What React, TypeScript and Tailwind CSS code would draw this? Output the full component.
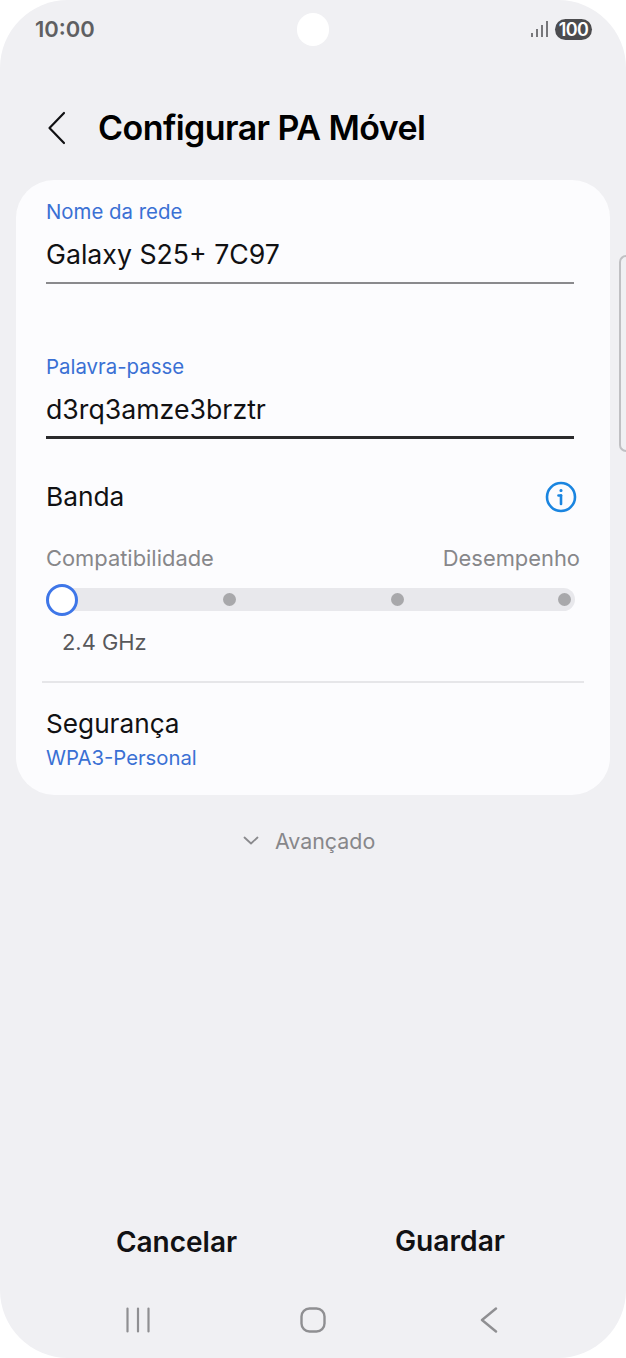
const font = "[font-family:Inter,'Noto_Sans',sans-serif]";

function StatusBar() {
  return (
    <div className="relative h-[58px] flex items-center justify-between pl-[35px] pr-[34px] shrink-0">
      <span className="text-[22px] font-semibold text-[#5f5f62] leading-none">10:00</span>
      {/* Camera cutout */}
      <div className="absolute left-[297px] top-[13px] w-[32px] h-[33px] rounded-full bg-white" />
      <div className="flex items-center gap-[7px]">
        <svg width="17" height="16" viewBox="0 0 17 16" fill="#77777a">
          <rect x="0" y="12" width="2" height="4" />
          <rect x="5" y="8" width="2" height="8" />
          <rect x="10" y="4" width="2" height="12" />
          <rect x="15" y="0" width="2" height="16" />
        </svg>
        <span className="w-[37px] h-[21px] rounded-full bg-[#4c4c4f] text-white text-[18px] font-semibold leading-[21px] text-center tracking-[-0.6px]">
          100
        </span>
      </div>
    </div>
  );
}

function Field({
  label,
  value,
  lineClass,
}: {
  label: string;
  value: string;
  lineClass: string;
}) {
  return (
    <div className="pl-[30px] pr-[36px]">
      <p className="text-[20.4px] leading-[24px] text-[#3a70d4]">{label}</p>
      <p className="mt-[13px] text-[26.7px] leading-[34px] text-[#111113]">{value}</p>
      <div className={lineClass} />
    </div>
  );
}

export default function App() {
  return (
    <div className={`w-[626px] h-[1358px] bg-white ${font}`}>
      <div className="relative w-full h-full rounded-[68px] bg-[#f0f0f3] flex flex-col overflow-hidden">
        <StatusBar />

        {/* Side handle */}
        <div className="absolute right-0 top-[255px] w-[7px] h-[197px] rounded-l-[8px] border-2 border-r-0 border-[#c0c0c3]" />

        {/* Header */}
        <div className="h-[122px] pt-[18px] flex items-center pl-[40px] shrink-0">
          <svg width="34" height="34" viewBox="0 0 34 34" fill="none" stroke="#111113" strokeWidth="2.2" strokeLinecap="round" strokeLinejoin="round">
            <path d="M24 2 L9.5 17 L24 32" />
          </svg>
          <h1 className="ml-[24px] text-[34px] font-semibold text-black tracking-[-0.56px] leading-none">
            Configurar PA Móvel
          </h1>
        </div>

        {/* Card */}
        <div className="mx-[16px] w-[594px] h-[615px] rounded-[38px] bg-[#fcfcfe] pt-[20px] shrink-0">
          <Field label="Nome da rede" value="Galaxy S25+ 7C97" lineClass="mt-[11px] h-[2px] bg-[#8a8a8d]" />
          <div className="h-[71px]" />
          <Field label="Palavra-passe" value="d3rq3amze3brztr" lineClass="mt-[10px] h-[3px] bg-[#2a2a2c]" />

          <div className="mt-[40px] pl-[30px] pr-[33px] flex items-center justify-between h-[36px]">
            <span className="text-[26.3px] text-[#111113]">Banda</span>
            <svg width="32" height="32" viewBox="0 0 32 32" fill="none" stroke="#1a85e0" strokeWidth="2.6" strokeLinecap="round">
              <circle cx="16" cy="16" r="14" />
              <path d="M16 14.5 V23" />
              <path d="M13.5 14.5 H16" />
              <circle cx="16" cy="9.5" r="1" fill="#1a85e0" strokeWidth="1.2" />
            </svg>
          </div>

          <div className="mt-[29px] pl-[30px] pr-[30px] flex justify-between text-[21.9px] leading-[28px] text-[#87878a]">
            <span>Compatibilidade</span>
            <span>Desempenho</span>
          </div>

          {/* Band slider */}
          <div className="relative mt-[16px] ml-[30px] w-[529px] h-[23px] rounded-full bg-[#e8e8ec] flex items-center justify-between pl-[177px] pr-[4px]">
            <div className="absolute left-0 top-[-4px] w-[32px] h-[32px] rounded-full bg-white border-[3px] border-[#3e76e8]" />
            <span className="w-[13px] h-[13px] rounded-full bg-[#a8a8ab]" />
            <span className="w-[13px] h-[13px] rounded-full bg-[#a8a8ab]" />
            <span className="w-[13px] h-[13px] rounded-full bg-[#a8a8ab]" />
          </div>

          <p className="mt-[17px] ml-[46px] text-[21.9px] leading-[28px] text-[#58585b]">2.4 GHz</p>

          <div className="mt-[25px] mx-[26px] h-[2px] bg-[#e6e6e9]" />

          <div className="mt-[24px] px-[30px]">
            <p className="text-[26.2px] leading-[34px] text-[#111113]">Segurança</p>
            <p className="mt-[5px] text-[20.3px] leading-[24px] text-[#3a70d4]">WPA3-Personal</p>
          </div>
        </div>

        {/* Advanced */}
        <div className="mt-[32px] h-[28px] flex items-center pl-[243px]">
          <svg width="16" height="10" viewBox="0 0 16 10" fill="none" stroke="#8a8a8d" strokeWidth="1.8" strokeLinecap="round" strokeLinejoin="round">
            <path d="M1.5 1.5 L8 7.5 L14.5 1.5" />
          </svg>
          <span className="ml-[16px] text-[21.4px] text-[#87878a]">Avançado</span>
        </div>

        {/* Actions */}
        <div className="mt-auto flex h-[60px] shrink-0 pt-[1px]">
          <button className="w-[353px] text-[28px] font-semibold text-[#111113]">Cancelar</button>
          <button className="w-[194px] text-[28.2px] font-semibold text-[#111113]">Guardar</button>
        </div>

        {/* Nav bar */}
        <div className="h-[87px] pt-[11px] flex items-center pl-[126px] shrink-0">
          <svg width="24" height="26" viewBox="0 0 24 26" fill="none" stroke="#8f8f92" strokeWidth="2.2" strokeLinecap="round">
            <path d="M1.5 1.5 V24.5 M12 1.5 V24.5 M22.5 1.5 V24.5" />
          </svg>
          <svg className="ml-[150px]" width="26" height="26" viewBox="0 0 26 26" fill="none" stroke="#8f8f92" strokeWidth="2.4">
            <rect x="1.5" y="1.5" width="23" height="23" rx="8" />
          </svg>
          <svg className="ml-[154px]" width="18" height="26" viewBox="0 0 18 26" fill="none" stroke="#8f8f92" strokeWidth="2.4" strokeLinecap="round" strokeLinejoin="round">
            <path d="M16 1.5 L2 13 L16 24.5" />
          </svg>
        </div>
      </div>
    </div>
  );
}
